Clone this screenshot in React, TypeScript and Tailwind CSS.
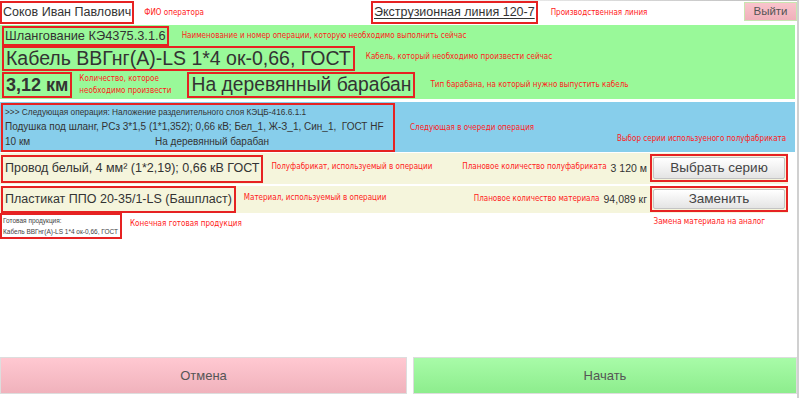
const sans = "font-['Liberation_Sans',Arial,sans-serif]";
const note = "font-['DejaVu_Sans_Condensed','DejaVu_Sans',Verdana,sans-serif] text-[8px] text-[#ff1a1a] whitespace-nowrap shrink-0";
const box = "border-2 border-[#e62222] shrink-0 whitespace-nowrap";

function Btn({ label, h }: { label: string; h: string }) {
  return (
    <div className={`${box} p-[1px]`}>
      <div className={`${h} flex w-[132px] items-center justify-center rounded-[2px] border border-[#c4c4c4] bg-gradient-to-b from-white to-[#e4e4e4] text-[13.5px] text-[#444]`}>
        {label}
      </div>
    </div>
  );
}

export default function App() {
  return (
    <div className={`${sans} relative h-[398px] w-[800px] overflow-hidden whitespace-nowrap bg-white text-[#333]`}>
      <div className="absolute right-[1px] top-0 h-full w-[2px] bg-[#d0d0d0]" />
      <div className="h-[1px] w-[797px] bg-gradient-to-r from-white via-white to-[#bbb]" />

      {/* top bar */}
      <div className="flex h-[23px] items-center">
        <div className="flex w-[371px] shrink-0 items-center">
          <div className={`${box} flex h-[23px] items-center px-[1px] text-[12.5px] text-[#333]`}>Соков Иван Павлович</div>
          <span className={`${note} ml-[10px] mt-[1px] text-[8.3px]`}>ФИО оператора</span>
        </div>
        <div className={`${box} flex h-[23px] items-center px-[1px] text-[12.5px] text-[#333] underline underline-offset-2`}>
          Экструзионная линия 120-7
        </div>
        <span className={`${note} ml-[13px] text-[8.3px]`}>Производственная линия</span>
        <div className="flex-1" />
        <div className="mr-[3px] mt-[-2px] flex h-[19px] w-[53px] shrink-0 items-center justify-center border border-[#c8e6b0] bg-gradient-to-b from-[#f9c4cc] to-[#f0b0ba] text-[11.5px] text-[#555]">
          Выйти
        </div>
      </div>

      {/* current operation */}
      <div className="mt-[1px] flex h-[74px] w-[795px] flex-col bg-[#99f999] pl-[2px] pt-[1px]">
        <div className="flex items-center">
          <div className={`${box} flex h-[20px] items-center px-[1px] text-[12.8px] leading-none`}>Шлангование КЭ4375.3.1.6</div>
          <span className={`${note} ml-[13px]`}>Наименование и номер операции, которую необходимо выполнить сейчас</span>
        </div>
        <div className="flex items-center">
          <div className={`${box} flex h-[25px] items-center px-[2px] text-[19.5px] leading-none`}>Кабель ВВГнг(А)-LS 1*4 ок-0,66, ГОСТ</div>
          <span className={`${note} ml-[11px] -mt-[4px]`}>Кабель, который необходимо произвести сейчас</span>
        </div>
        <div className="mt-[1px] flex items-center">
          <div className={`${box} flex h-[26px] items-center px-[2px] text-[18px] font-bold leading-none`}>3,12 км</div>
          <div className={`${note} ml-[7px] leading-[12px]`}>
            Количество, которое
            <br />
            необходимо произвести
          </div>
          <div className={`${box} ml-[16px] flex h-[26px] items-center px-[2px] text-[19.3px] leading-none`}>На деревянный барабан</div>
          <span className={`${note} ml-[15px]`}>Тип барабана, на который нужно выпустить кабель</span>
        </div>
      </div>

      {/* next operation */}
      <div className="mt-[3px] flex h-[50px] w-[795px] bg-[#87ceeb] pl-[1px] pt-[1px]">
        <div className={`${box} flex h-[49px] w-[394px] flex-col justify-between overflow-hidden px-[2px] pb-[1px] pt-[1px]`}>
          <div className="text-[8.3px] leading-[12px]">&gt;&gt;&gt; Следующая операция: Наложение разделительного слоя КЭЦБ-416.6.1.1</div>
          <div className="text-[10px] leading-[14px]">Подушка под шланг, РСз 3*1,5 (1*1,352); 0,66 кВ; Бел_1, Ж-З_1, Син_1,&nbsp; ГОСТ HF</div>
          <div className="flex text-[10px] leading-[14px]">
            <span className="w-[150px]">10 км</span>
            <span>На деревянный барабан</span>
          </div>
        </div>
        <div className="relative flex-1">
          <span className={`${note} absolute left-[15px] top-[19px]`}>Следующая в очереди операция</span>
          <span className={`${note} absolute left-[222px] top-[30px]`}>Выбор серии используеного полуфабриката</span>
        </div>
      </div>

      {/* materials */}
      <div className="mt-[1px] flex h-[31px] w-[788px] items-center bg-[#f5f5dc] pl-[1px]">
        <div className={`${box} flex h-[28px] items-center px-[2px] text-[12.5px] leading-none`}>Провод белый, 4 мм² (1*2,19); 0,66 кВ ГОСТ</div>
        <span className={`${note} ml-[8px] -mt-[4px]`}>Полуфабрикат, используемый в операции</span>
        <div className="flex-1" />
        <span className={`${note} -mt-[3px]`}>Плановое количество полуфабриката</span>
        <span className="ml-[4px] shrink-0 text-[10.5px]">3 120 м</span>
        <div className="ml-[3px] -mt-[1px] shrink-0"><Btn label="Выбрать серию" h="h-[22px]" /></div>
      </div>
      <div className="mt-[2px] flex h-[27px] w-[788px] items-center bg-[#f5f5dc] pl-[1px]">
        <div className={`${box} flex h-[27px] items-center px-[2px] text-[12.5px] leading-none`}>Пластикат ППО 20-35/1-LS (Башпласт)</div>
        <span className={`${note} ml-[8px] -mt-[3px]`}>Материал, используемый в операции</span>
        <div className="flex-1" />
        <span className={`${note} -mt-[1px]`}>Плановое количество материала</span>
        <span className="ml-[4px] shrink-0 text-[10.5px]">94,089 кг</span>
        <div className="ml-[3px] -mt-[1px] shrink-0"><Btn label="Заменить" h="h-[20px]" /></div>
      </div>

      {/* final product */}
      <div className="flex w-[788px] items-start">
        <div className={`${box} h-[26px] w-[122px] overflow-hidden px-[1px] text-[6.5px] leading-[11px] text-[#444]`}>
          <div>Готовая продукция:</div>
          <div>Кабель ВВГнг(А)-LS 1*4 ок-0,66, ГОСТ</div>
        </div>
        <span className={`${note} ml-[8px] mt-[5px]`}>Конечная готовая продукция</span>
        <div className="flex-1" />
        <span className={`${note} mr-[23px] mt-[3px]`}>Замена материала на аналог</span>
      </div>

      {/* actions */}
      <div className="absolute left-0 top-[357px] flex w-[797px] gap-[6px]">
        <div className="flex h-[37px] w-[407px] items-center justify-center border border-[#ddd] bg-gradient-to-b from-[#ffc8d1] to-[#f0b2bc] text-[13px] text-[#555]">
          Отмена
        </div>
        <div className="flex h-[37px] flex-1 items-center justify-center border border-[#ddd] bg-gradient-to-b from-[#a8fba8] to-[#8ded8d] text-[13px] text-[#555]">
          Начать
        </div>
      </div>
    </div>
  );
}
